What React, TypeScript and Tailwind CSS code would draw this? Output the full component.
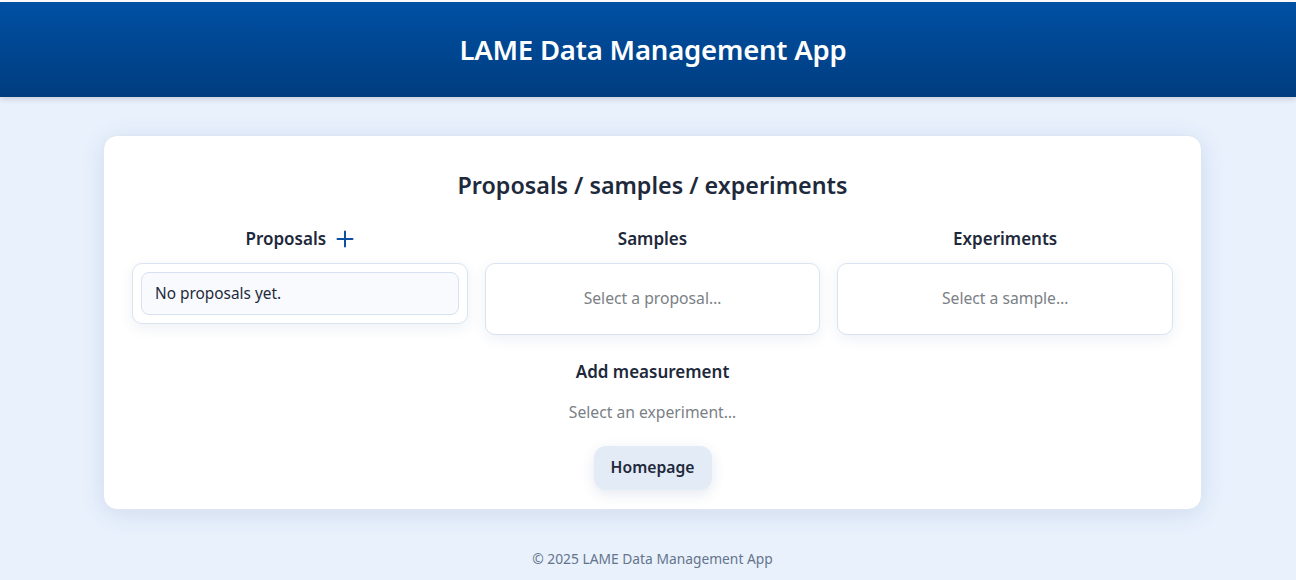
import React from "react";

export default function App() {
  return (
    <div className="min-h-[580px] bg-[#e9f1fd] flex flex-col font-['Noto_Sans',sans-serif]">
      <div className="h-[2px] bg-white" />
      <header className="h-[95px] pl-[10px] bg-gradient-to-b from-[#0050a4] to-[#003d7f] flex items-center justify-center shadow-[0_2px_6px_rgba(0,0,0,0.15)]">
        <h1 className="text-white text-[27.5px] font-semibold tracking-[-0.2px]">
          LAME Data Management App
        </h1>
      </header>
      <main className="flex justify-center pt-[38px] pl-[9px]">
        <div className="w-[1099px] bg-white rounded-[14px] shadow-[0_4px_24px_rgba(30,64,120,0.12)] border border-[#dde6f3] px-[28px] pt-[34px] pb-[19px] flex flex-col items-center">
          <h2 className="text-[23.3px] font-semibold text-[#1e293b] leading-[30px]">
            Proposals / samples / experiments
          </h2>
          <div className="w-full grid grid-cols-3 gap-[17px] mt-[27px] items-start">
            <div className="flex flex-col">
              <div className="flex items-center justify-center gap-[10px] h-[24px]">
                <span className="text-[17px] font-semibold text-[#1e293b]">Proposals</span>
                <svg width="18" height="18" viewBox="0 0 18 18" className="text-[#0b4fa0]">
                  <path d="M9 1.5v15M1.5 9h15" stroke="currentColor" strokeWidth="2" strokeLinecap="round" />
                </svg>
              </div>
              <div className="mt-[12px] rounded-[10px] border border-[#d9e3f2] bg-white shadow-[0_4px_14px_rgba(30,64,120,0.08)] p-[8px]">
                <div className="rounded-[8px] border border-[#d6e1f1] bg-[#f8fafe] h-[43px] flex items-center px-[13px] text-[15.4px] text-[#1e293b]">
                  No proposals yet.
                </div>
              </div>
            </div>
            <div className="flex flex-col">
              <div className="flex items-center justify-center h-[24px]">
                <span className="text-[17px] font-semibold text-[#1e293b]">Samples</span>
              </div>
              <div className="mt-[12px] rounded-[10px] border border-[#d9e3f2] bg-white shadow-[0_4px_14px_rgba(30,64,120,0.08)] h-[72px] flex items-center justify-center text-[15.7px] text-[#7b7f86]">
                Select a proposal…
              </div>
            </div>
            <div className="flex flex-col">
              <div className="flex items-center justify-center h-[24px]">
                <span className="text-[17px] font-semibold text-[#1e293b]">Experiments</span>
              </div>
              <div className="mt-[12px] rounded-[10px] border border-[#d9e3f2] bg-white shadow-[0_4px_14px_rgba(30,64,120,0.08)] h-[72px] flex items-center justify-center text-[15.7px] text-[#7b7f86]">
                Select a sample…
              </div>
            </div>
          </div>
          <h3 className="mt-[25px] text-[17px] font-semibold text-[#1e293b] leading-[24px]">
            Add measurement
          </h3>
          <p className="mt-[18px] text-[15.7px] text-[#7b7f86] leading-[20px]">Select an experiment…</p>
          <button className="mt-[24px] h-[44px] w-[118px] rounded-[12px] bg-[#e3ebf7] text-[15.7px] font-semibold text-[#1e293b] shadow-[0_4px_14px_rgba(30,64,120,0.12)]">
            Homepage
          </button>
        </div>
      </main>
      <footer className="mt-[39px] pl-[9px] text-center text-[13.8px] text-[#64748b]">
        © 2025 LAME Data Management App
      </footer>
    </div>
  );
}
